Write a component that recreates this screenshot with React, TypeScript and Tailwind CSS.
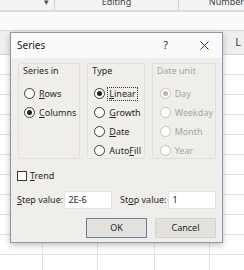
import React from "react"

const font = { fontFamily: '"Noto Sans", "Open Sans", sans-serif' }

function Radio({ label, checked = false, disabled = false, focus = false }: { label: React.ReactNode; checked?: boolean; disabled?: boolean; focus?: boolean }) {
  return (
    <div className="flex items-center h-[19px] gap-[3px]">
      <span
        className={`w-[11px] h-[11px] rounded-full border bg-white flex items-center justify-center ${
          disabled ? "border-[#c4c2bf]" : "border-[#3a3a3a]"
        }`}
      >
        {checked && <span className={`w-[5px] h-[5px] rounded-full ${disabled ? "bg-[#b8b6b3]" : "bg-[#1f1f1f]"}`} />}
      </span>
      <span
        className={`leading-[12px] px-[1px] ${disabled ? "text-[#a6a4a1]" : "text-[#262626]"} ${
          focus ? "outline outline-1 outline-dotted outline-[#333]" : ""
        }`}
      >
        {label}
      </span>
    </div>
  )
}

function Group({ title, width, disabled = false, children }: { title: string; width: string; disabled?: boolean; children: React.ReactNode }) {
  return (
    <div className={`${width} h-[96px] border border-[#e2dfdb] rounded-[2px] flex flex-col`}>
      <div className={`pl-[4px] pt-[1px] h-[12px] leading-[12px] ${disabled ? "text-[#a6a4a1]" : "text-[#262626]"}`}>{title}</div>
      <div className="flex flex-col pl-[4px] pt-[8px]">{children}</div>
    </div>
  )
}

export default function App() {
  const rows = Array.from({ length: 11 })
  return (
    <div className="relative w-[244px] h-[270px] overflow-hidden bg-white text-[9px] text-[#262626]" style={font}>
      {/* ribbon strip */}
      <div className="h-[10px] bg-[#f3f3f3] flex overflow-hidden border-b-2 border-[#dcdcdc] box-content">
        <div className="w-[57px] border-r border-[#cfcfcf] flex justify-end pr-[5px] -mt-[5px] text-[9px] text-[#555]">▾</div>
        <div className="w-[129px] border-r border-[#cfcfcf] flex justify-center -mt-[5px] text-[#444]">Editing</div>
        <div className="flex-1 pl-[30px] -mt-[5px] text-[#444]">Number</div>
      </div>
      {/* formula area */}
      <div className="h-[19px] bg-[#fafafa] border-b border-[#d9d9d9]" />
      {/* column header */}
      <div className="h-[24px] bg-[#efefef] border-b border-[#d6d6d6] flex justify-end items-center pr-[3px] text-[11px] text-[#3c3c3c]">
        <span className="text-[#3c3c3c]">L</span>
      </div>
      {/* cells */}
      <div className="flex flex-col">
        {rows.map((_, i) => (
          <div key={i} className="h-[20px] grid grid-cols-[43px_55px_57px_55px_1fr] border-b border-[#e3e3e3]">
            <div className="border-r border-[#e3e3e3]" />
            <div className="border-r border-[#e3e3e3]" />
            <div className="border-r border-[#e3e3e3]" />
            <div className="border-r border-[#e3e3e3]" />
            <div />
          </div>
        ))}
      </div>

      {/* Series dialog */}
      <div className="absolute left-[10px] top-[32px] w-[213px] h-[211px] border border-[#8b99ad] bg-[#f0eeeb] shadow-[0_2px_6px_rgba(0,0,0,0.25)] flex flex-col">
        <div className="h-[25px] bg-[#fafafa] flex items-center pl-[6px] pr-[13px]">
          <span className="text-[10px] text-[#222]">Series</span>
          <span className="ml-auto text-[11px] text-[#333] mr-[32px]">?</span>
          <svg width="9" height="9" viewBox="0 0 9 9">
            <path d="M0.5 0.5 L8.5 8.5 M8.5 0.5 L0.5 8.5" stroke="#333" strokeWidth="1" />
          </svg>
        </div>

        <div className="flex-1 flex flex-col px-[6px] pt-[5px]">
          <div className="flex gap-[7px] pl-[1px]">
            <Group title="Series in" width="w-[63px]">
              <div className="pl-[1px] flex flex-col">
                <Radio label={<><u>R</u>ows</>} />
                <Radio label={<><u>C</u>olumns</>} checked />
              </div>
            </Group>
            <Group title="Type" width="w-[58px]">
              <div className="pl-[2px] flex flex-col">
                <Radio label={<><u>L</u>inear</>} checked focus />
                <Radio label={<><u>G</u>rowth</>} />
                <Radio label={<><u>D</u>ate</>} />
                <Radio label={<>Auto<u>F</u>ill</>} />
              </div>
            </Group>
            <Group title="Date unit" width="w-[65px]" disabled>
              <div className="pl-[3px] flex flex-col">
                <Radio label="Day" checked disabled />
                <Radio label="Weekday" disabled />
                <Radio label="Month" disabled />
                <Radio label="Year" disabled />
              </div>
            </Group>
          </div>

          <div className="flex items-center gap-[3px] mt-[12px] h-[10px]">
            <span className="w-[10px] h-[10px] border border-[#3a3a3a] bg-white" />
            <span>
              <u>T</u>rend
            </span>
          </div>

          <div className="flex items-center mt-[10px] h-[18px]">
            <span className="w-[48px]">
              <u>S</u>tep value:
            </span>
            <div className="w-[48px] h-[18px] bg-white border border-[#e4e2df] flex items-center pl-[3px]">2E-6</div>
            <span className="ml-[8px] w-[49px]">
              St<u>o</u>p value:
            </span>
            <div className="w-[48px] h-[18px] bg-white border border-[#e4e2df] flex items-center pl-[3px]">1</div>
          </div>

          <div className="flex justify-end gap-[8px] mt-[9px]">
            <button className="w-[61px] h-[20px] bg-[#e3e1de] border border-[#6f7f98] text-[9px] text-[#262626]">OK</button>
            <button className="w-[61px] h-[20px] bg-[#e3e1de] border border-[#d6d3cf] text-[9px] text-[#262626]">Cancel</button>
          </div>
        </div>
      </div>
    </div>
  )
}
